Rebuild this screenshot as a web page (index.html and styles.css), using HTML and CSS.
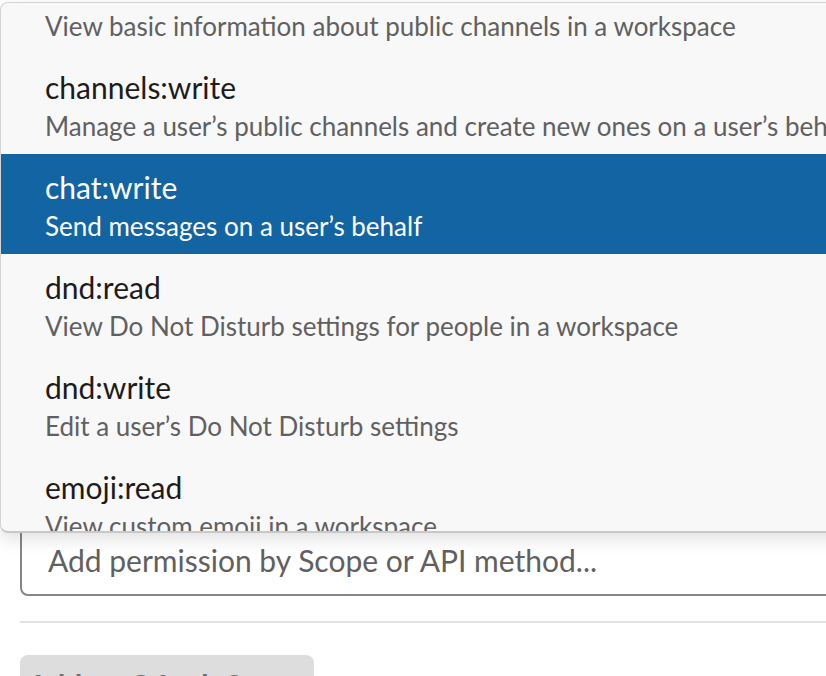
FILE: index.html
```html
<!DOCTYPE html>
<html lang="en">
<head>
  <meta charset="UTF-8">
  <title>OAuth Scopes</title>
  <link rel="stylesheet" href="styles.css">
</head>
<body>
  <main class="scopes">
    <div class="scope-field">
      <input type="text" class="scope-input" placeholder="Add permission by Scope or API method...">

      <div class="scope-menu">
        <ul class="scope-list">
          <li class="scope-item">
            <div class="scope-name">channels:read</div>
            <div class="scope-desc">View basic information about public channels in a workspace</div>
          </li>
          <li class="scope-item">
            <div class="scope-name">channels:write</div>
            <div class="scope-desc">Manage a user’s public channels and create new ones on a user’s behalf</div>
          </li>
          <li class="scope-item active">
            <div class="scope-name">chat:write</div>
            <div class="scope-desc">Send messages on a user’s behalf</div>
          </li>
          <li class="scope-item">
            <div class="scope-name">dnd:read</div>
            <div class="scope-desc">View Do Not Disturb settings for people in a workspace</div>
          </li>
          <li class="scope-item">
            <div class="scope-name">dnd:write</div>
            <div class="scope-desc">Edit a user’s Do Not Disturb settings</div>
          </li>
          <li class="scope-item">
            <div class="scope-name">emoji:read</div>
            <div class="scope-desc">View custom emoji in a workspace</div>
          </li>
          <li class="scope-item">
            <div class="scope-name">files:read</div>
            <div class="scope-desc">View files shared in channels and conversations that a user has access to</div>
          </li>
        </ul>
      </div>
    </div>

    <hr class="divider">

    <button class="add-btn" disabled>Add an OAuth Scope</button>
  </main>
</body>
</html>
```

FILE: styles.css
```css
body { margin: 0; background: #fff; font-family: Lato, "Noto Sans", sans-serif; overflow: hidden; }
.scopes { padding: 0 0 0 20px; }

.scope-field { margin-top: 523px; }
.scope-input { display: block; box-sizing: border-box; width: 840px; height: 73px; border: 2px solid #868686; border-radius: 8px; padding: 0 26px; font-family: inherit; font-size: 30px; background: #fff; }
.scope-input::placeholder { color: #616061; }

/* dropdown lies over the input */
.scope-menu { position: absolute; left: 0; top: 2px; width: 900px; height: 531px; box-sizing: border-box; background: #f8f8f8; border: 1px solid #d4d4d4; border-bottom: 2px solid #c8c8c8; border-radius: 8px; overflow: hidden; box-shadow: 0 6px 18px rgba(0, 0, 0, 0.12); }
.scope-list { list-style: none; margin: -49px 0 0; padding: 0; }
.scope-item { height: 100px; box-sizing: border-box; padding: 15px 0 0 44px; white-space: nowrap; }
.scope-name { font-size: 30px; line-height: 36px; color: #1d1c1d; }
.scope-desc { font-size: 26px; line-height: 40px; margin-top: 1px; color: #616061; }
.scope-item.active { background: #1264a3; }
.scope-item.active .scope-name,
.scope-item.active .scope-desc { color: #fff; }

.divider { margin: 25px 0 0; height: 2px; border: 0; background: #e2e2e2; }

.add-btn { display: block; margin-top: 32px; width: 294px; height: 60px; border: 0; border-radius: 8px; background: #dddddd; color: #6f6f6f; font-family: inherit; font-size: 30px; font-weight: 700; text-align: center; padding: 0; }
```
